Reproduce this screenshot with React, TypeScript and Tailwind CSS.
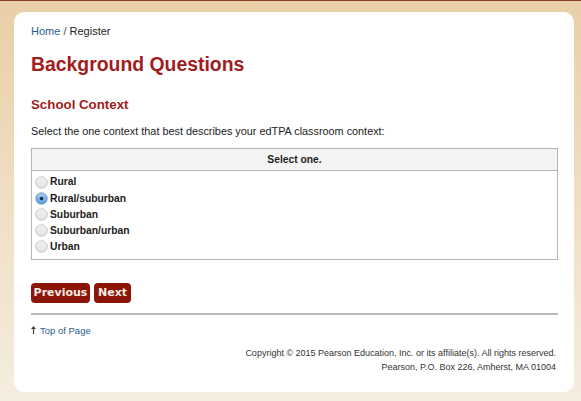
import React from "react";

const options = ["Rural", "Rural/suburban", "Suburban", "Suburban/urban", "Urban"];

function Radio({ checked }: { checked: boolean }) {
  return (
    <svg width="13" height="13" viewBox="0 0 13 13" className="shrink-0">
      <defs>
        <linearGradient id={checked ? "rg1" : "rg0"} x1="0" y1="0" x2="0" y2="1">
          {checked ? (
            <>
              <stop offset="0" stopColor="#a9cdf2" />
              <stop offset="1" stopColor="#5b9de0" />
            </>
          ) : (
            <>
              <stop offset="0" stopColor="#f4f4f4" />
              <stop offset="1" stopColor="#e2e2e2" />
            </>
          )}
        </linearGradient>
      </defs>
      <circle cx="6.5" cy="6.5" r="5.7" fill={`url(#${checked ? "rg1" : "rg0"})`} stroke={checked ? "#5b87b8" : "#b9b9b9"} strokeWidth="0.8" />
      {checked && <circle cx="6.5" cy="6.5" r="1.8" fill="#1b2f4d" />}
    </svg>
  );
}

export default function App() {
  return (
    <div
      className="w-[581px] h-[401px] overflow-hidden border-t border-[#8e3b2c] bg-gradient-to-b from-[#e9cfa6] via-[#efdfc4] to-[#f5ede0] pl-[14px] pr-[7px] pt-[11px]"
      style={{ fontFamily: '"Liberation Sans", Arial, sans-serif' }}
    >
      <div className="bg-white rounded-[10px] h-[380px] pl-[17px] pr-[16px] pt-[12px] text-[#222]">
        <div className="text-[11px] leading-[14px]">
          <span className="text-[#2a5d8f]">Home</span>
          <span className="text-[#555]"> / </span>
          <span>Register</span>
        </div>
        <h1 className="mt-[14px] text-[19.4px] leading-[24px] font-bold text-[#a11d1d]">Background Questions</h1>
        <h2 className="mt-[20px] text-[13.3px] leading-[18px] font-bold text-[#a11d1d]">School Context</h2>
        <p className="mt-[10px] text-[10.85px] leading-[14px]">Select the one context that best describes your edTPA classroom context:</p>
        <div className="mt-[10px] border border-[#b5b5b5]">
          <div className="h-[22px] bg-[#f4f4f4] border-b border-[#b5b5b5] flex items-center justify-center text-[10.3px] font-bold">
            Select one.
          </div>
          <div className="pt-[3px] pb-[4px] pl-[3px]">
            {options.map((o) => (
              <label key={o} className="flex items-center h-[16.2px] text-[10.3px] font-bold">
                <Radio checked={o === "Rural/suburban"} />
                <span className="ml-[2px]">{o}</span>
              </label>
            ))}
          </div>
        </div>
        <div className="mt-[23px] flex gap-[4px]">
          <button
            className="h-[20px] w-[59px] rounded-[4px] bg-[#8a1508] text-[#f7e9e4] text-[11px] font-bold"
            style={{ fontFamily: '"DejaVu Sans", Verdana, sans-serif' }}
          >
            Previous
          </button>
          <button
            className="h-[20px] w-[37px] rounded-[4px] bg-[#8a1508] text-[#f7e9e4] text-[11px] font-bold"
            style={{ fontFamily: '"DejaVu Sans", Verdana, sans-serif' }}
          >
            Next
          </button>
        </div>
        <div className="mt-[10px] h-[2px] bg-[#b8b8b8]" />
        <div className="mt-[10px] flex items-center text-[9.5px] leading-[12px] text-[#2a5d8f]">
          <svg width="5" height="8" viewBox="0 0 5 8" className="mr-[4px] mb-[1px]">
            <path d="M2.5 0 L5 3 L3.1 3 L3.1 8 L1.9 8 L1.9 3 L0 3 Z" fill="#444" />
          </svg>
          <span>Top of Page</span>
        </div>
        <div className="mt-[9px] pr-[2px] text-right text-[9px] leading-[14px] text-[#333]">
          <div>Copyright © 2015 Pearson Education, Inc. or its affiliate(s). All rights reserved.</div>
          <div>Pearson, P.O. Box 226, Amherst, MA 01004</div>
        </div>
      </div>
    </div>
  );
}
